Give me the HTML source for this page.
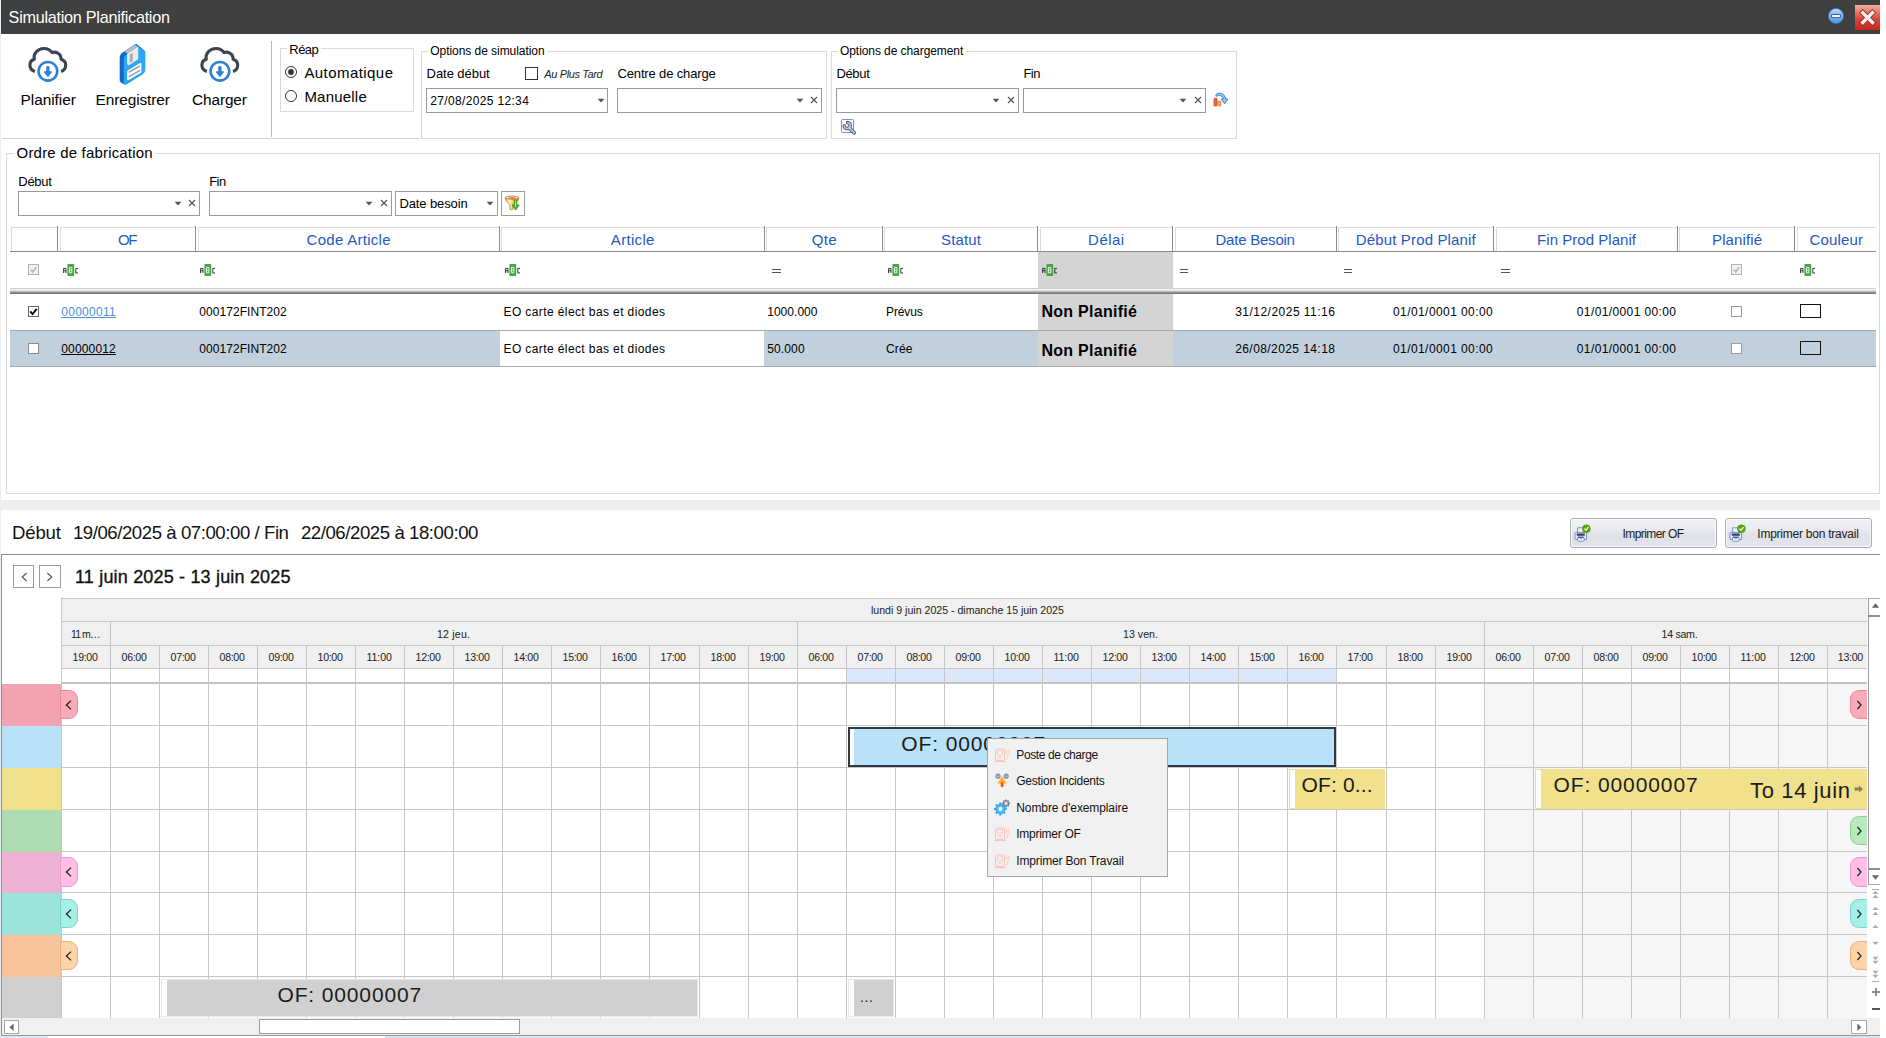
<!DOCTYPE html>
<html lang="fr"><head><meta charset="utf-8"><title>Simulation Planification</title><style>
html,body{margin:0;padding:0}
body{width:1886px;height:1038px;overflow:hidden;position:relative;background:#fff;font-family:"Liberation Sans",sans-serif}
.a{position:absolute;box-sizing:border-box}
.t{white-space:pre}
</style></head><body>
<div class="a" style="left:0px;top:0px;width:1px;height:1038px;background:#e9edf4;"></div>
<div class="a" style="left:1px;top:0px;width:1879px;height:34px;background:#404040;"></div>
<span class="a t" style="left:8.60px;top:9px;font-size:16.2px;line-height:1;color:#fff;letter-spacing:-0.261px;">Simulation Planification</span>
<svg class="a" style="left:1826px;top:6px" width="20" height="20" viewBox="0 0 20 20"><defs><linearGradient id="gmin" x1="0" y1="0" x2="0" y2="1"><stop offset="0" stop-color="#b9dcf6"/><stop offset="0.5" stop-color="#7fb7ea"/><stop offset="1" stop-color="#4d8fdc"/></linearGradient></defs>
<circle cx="10" cy="10" r="7.6" fill="url(#gmin)" stroke="#3a6fc0" stroke-width="0.8"/>
<rect x="5.6" y="8.6" width="8.8" height="2.8" fill="#fff" stroke="#2d56a8" stroke-width="0.9"/></svg>
<svg class="a" style="left:1854px;top:4px" width="28" height="28" viewBox="0 0 28 28"><defs><linearGradient id="gcl" x1="0" y1="0" x2="0" y2="1"><stop offset="0" stop-color="#f3b0a4"/><stop offset="0.45" stop-color="#dd5a4c"/><stop offset="0.55" stop-color="#d6463a"/><stop offset="1" stop-color="#c8281e"/></linearGradient></defs>
<rect x="1" y="1" width="25" height="25" fill="url(#gcl)"/>
<path d="M8.7 8.7 L18.5 18.5 M18.5 8.7 L8.7 18.5" stroke="#a82218" stroke-width="5.2" stroke-linecap="square"/>
<path d="M8.7 8.7 L18.5 18.5 M18.5 8.7 L8.7 18.5" stroke="#eef1f8" stroke-width="3.4" stroke-linecap="square"/></svg>
<svg class="a" style="left:20px;top:40px" width="60" height="50" viewBox="0 0 60 50"><path d="M14.9 31.5 C11.6 30.4 9.9 27.9 9.9 25 C9.9 22.3 11.6 20.1 14.3 19.3 C13.1 13.8 17.6 8.5 24.1 8.5 C27.5 8.5 30.3 10 32.1 12.7 C35.6 11.2 39.9 13.2 40.8 17 C41 17.9 41 18.7 41.2 19.3 C44 20.3 45.7 22.4 45.7 25 C45.7 27.9 44.1 30.4 41.1 31.5" fill="none" stroke="#3a4553" stroke-width="3.1" stroke-linecap="butt" stroke-linejoin="round"/>
<circle cx="27.9" cy="31.3" r="9.35" fill="#fff" stroke="#2f80d1" stroke-width="2.6"/>
<path d="M26.2 27.2 Q26.2 25.9 27.9 25.9 Q29.6 25.9 29.6 27.2 L29.6 31.2 L31.4 31.2 Q32.4 31.4 31.7 32.4 L28.5 36.6 Q27.9 37.3 27.3 36.6 L24.1 32.4 Q23.4 31.4 24.4 31.2 L26.2 31.2 Z" fill="#2f80d1"/></svg>
<svg class="a" style="left:192.2px;top:40px" width="60" height="50" viewBox="0 0 60 50"><path d="M14.9 31.5 C11.6 30.4 9.9 27.9 9.9 25 C9.9 22.3 11.6 20.1 14.3 19.3 C13.1 13.8 17.6 8.5 24.1 8.5 C27.5 8.5 30.3 10 32.1 12.7 C35.6 11.2 39.9 13.2 40.8 17 C41 17.9 41 18.7 41.2 19.3 C44 20.3 45.7 22.4 45.7 25 C45.7 27.9 44.1 30.4 41.1 31.5" fill="none" stroke="#3a4553" stroke-width="3.1" stroke-linecap="butt" stroke-linejoin="round"/>
<circle cx="27.9" cy="31.3" r="9.35" fill="#fff" stroke="#2f80d1" stroke-width="2.6"/>
<path d="M26.2 27.2 Q26.2 25.9 27.9 25.9 Q29.6 25.9 29.6 27.2 L29.6 31.2 L31.4 31.2 Q32.4 31.4 31.7 32.4 L28.5 36.6 Q27.9 37.3 27.3 36.6 L24.1 32.4 Q23.4 31.4 24.4 31.2 L26.2 31.2 Z" fill="#2f80d1"/></svg>
<svg class="a" style="left:105px;top:40px" width="60" height="50" viewBox="0 0 60 50"><path d="M30.2 4.2 Q31 3.6 31.9 4.3 L39.4 10.4 Q40.2 11.2 40.2 12.2 L40.2 29.4 Q40.2 32.6 37.4 34.3 L21.6 44.2 Q20.2 45 18.9 44.2 L15.9 42.4 Q14.7 41.6 14.7 40.2 L14.7 18 Q14.7 14.2 17.6 12.4 Z" fill="#0f6ac8"/>
<path d="M18.8 18.6 Q18.8 16.2 20.8 14.9 L32.4 6.9 Q33.3 6.3 34.1 7 L39.4 10.9 Q40.2 11.6 40.2 12.6 L40.2 29.4 Q40.2 32.6 37.4 34.3 L21.6 44 Q18.8 45.4 18.8 42.6 Z" fill="#2ea7f9"/>
<path d="M19.5 11.4 L29.9 4.8 L33.2 6.7 L22.6 13.6 Z" fill="#b9bdbb"/>
<path d="M22.6 13.6 L33.2 6.7 L33.2 19.3 L24.3 25.1 Q23.3 25.6 22.8 24.7 L22.1 23.6 L22.1 14.2 Z" fill="#ebebeb"/>
<path d="M24.8 14.5 L27.7 13.1 L27.7 21.2 L24.8 22.7 Z" fill="#a9b0ad"/>
<path d="M22.1 32 Q22.1 30.8 23.1 30.2 L35 23.1 Q36.4 22.4 36.4 24 L36.4 31.4 Q36.4 32.4 35.6 32.9 L23.6 40 Q22.1 40.7 22.1 39.2 Z" fill="#fff"/>
<path d="M24.3 32 L34.6 26.2 M24.3 36.5 L34.6 30.6" stroke="#9ba4a1" stroke-width="1.5" stroke-linecap="round"/></svg>
<span class="a t" style="left:20.50px;top:92px;font-size:15.4px;line-height:1;color:#000;letter-spacing:-0.021px;">Planifier</span>
<span class="a t" style="left:95.50px;top:92px;font-size:15.4px;line-height:1;color:#000;letter-spacing:-0.081px;">Enregistrer</span>
<span class="a t" style="left:192.00px;top:92px;font-size:15.4px;line-height:1;color:#000;letter-spacing:-0.112px;">Charger</span>
<div class="a" style="left:271px;top:41px;width:1px;height:96px;background:#b9b9b9;"></div>
<div class="a" style="left:2px;top:138px;width:417px;height:1px;background:#cfcfcf;"></div>
<div class="a" style="left:280px;top:48px;width:134px;height:64px;border:1px solid #dadada;"></div>
<div class="a" style="left:286.8px;top:47px;width:34.4px;height:3px;background:#fff;"></div>
<span class="a t" style="left:289.30px;top:43px;font-size:13px;line-height:1;color:#000;letter-spacing:-0.557px;">Réap</span>
<svg class="a" style="left:282.9px;top:63.5px" width="16" height="16" viewBox="0 0 16 16"><circle cx="8" cy="8" r="5.5" fill="#fff" stroke="#333" stroke-width="1"/><circle cx="8" cy="8" r="2.9" fill="#333"/></svg>
<svg class="a" style="left:282.9px;top:87.5px" width="16" height="16" viewBox="0 0 16 16"><circle cx="8" cy="8" r="5.5" fill="#fff" stroke="#333" stroke-width="1"/></svg>
<span class="a t" style="left:304.40px;top:65px;font-size:15px;line-height:1;color:#000;letter-spacing:0.437px;">Automatique</span>
<span class="a t" style="left:304.40px;top:89px;font-size:15px;line-height:1;color:#000;letter-spacing:0.214px;">Manuelle</span>
<div class="a" style="left:421px;top:51px;width:406px;height:88px;border:1px solid #dadada;"></div>
<div class="a" style="left:427.8px;top:50px;width:119.3px;height:3px;background:#fff;"></div>
<span class="a t" style="left:430.30px;top:45px;font-size:12px;line-height:1;color:#000;letter-spacing:-0.054px;">Options de simulation</span>
<div class="a" style="left:831px;top:51px;width:406px;height:88px;border:1px solid #dadada;"></div>
<div class="a" style="left:837.5px;top:50px;width:128.3px;height:3px;background:#fff;"></div>
<span class="a t" style="left:840.00px;top:45px;font-size:12px;line-height:1;color:#000;letter-spacing:-0.072px;">Options de chargement</span>
<span class="a t" style="left:426.60px;top:67px;font-size:13px;line-height:1;color:#000;letter-spacing:-0.059px;">Date début</span>
<div class="a" style="left:525px;top:67px;width:13px;height:13px;background:#fff;border:1px solid #333;"></div>
<span class="a t" style="left:544.35px;top:69px;font-size:11px;line-height:1;color:#222;letter-spacing:-0.388px;font-style:italic;">Au Plus Tard</span>
<span class="a t" style="left:617.50px;top:67px;font-size:13px;line-height:1;color:#000;letter-spacing:-0.148px;">Centre de charge</span>
<span class="a t" style="left:836.40px;top:67px;font-size:13px;line-height:1;color:#000;letter-spacing:-0.328px;">Début</span>
<span class="a t" style="left:1023.40px;top:67px;font-size:13px;line-height:1;color:#000;letter-spacing:-0.535px;">Fin</span>
<div class="a" style="left:426px;top:88px;width:182px;height:25px;background:#fff;border:1px solid #9a9a9a;"></div>
<svg class="a" style="left:596.6px;top:98.1px" width="8" height="5" viewBox="0 0 8 5"><path d="M0.6 0.8 L7.4 0.8 L4 4.4 Z" fill="#555"/></svg>
<span class="a t" style="left:430.30px;top:95px;font-size:12px;line-height:1;color:#000;letter-spacing:0.339px;">27/08/2025 12:34</span>
<div class="a" style="left:617px;top:88px;width:205px;height:25px;background:#fff;border:1px solid #9a9a9a;"></div>
<svg class="a" style="left:796px;top:98.1px" width="8" height="5" viewBox="0 0 8 5"><path d="M0.6 0.8 L7.4 0.8 L4 4.4 Z" fill="#555"/></svg>
<svg class="a" style="left:810.4px;top:96.3px" width="8" height="8" viewBox="0 0 8 8"><path d="M1 1 L7 7 M7 1 L1 7" stroke="#555" stroke-width="1.2" fill="none"/></svg>
<div class="a" style="left:836px;top:88px;width:183px;height:25px;background:#fff;border:1px solid #9a9a9a;"></div>
<svg class="a" style="left:992px;top:98.1px" width="8" height="5" viewBox="0 0 8 5"><path d="M0.6 0.8 L7.4 0.8 L4 4.4 Z" fill="#555"/></svg>
<svg class="a" style="left:1006.8px;top:96.3px" width="8" height="8" viewBox="0 0 8 8"><path d="M1 1 L7 7 M7 1 L1 7" stroke="#555" stroke-width="1.2" fill="none"/></svg>
<div class="a" style="left:1023px;top:88px;width:183px;height:25px;background:#fff;border:1px solid #9a9a9a;"></div>
<svg class="a" style="left:1179px;top:98.1px" width="8" height="5" viewBox="0 0 8 5"><path d="M0.6 0.8 L7.4 0.8 L4 4.4 Z" fill="#555"/></svg>
<svg class="a" style="left:1193.8px;top:96.3px" width="8" height="8" viewBox="0 0 8 8"><path d="M1 1 L7 7 M7 1 L1 7" stroke="#555" stroke-width="1.2" fill="none"/></svg>
<svg class="a" style="left:1213px;top:92px" width="16" height="15" viewBox="0 0 16 15"><rect x="1" y="6.2" width="3" height="7.8" rx="0.9" fill="#ea6a55" stroke="#c23a26" stroke-width="0.8"/>
<rect x="5.1" y="9.2" width="2.8" height="4.8" rx="0.8" fill="#f6b45a" stroke="#c87a22" stroke-width="0.8"/>
<path d="M3.4 4.2 C2.4 3.2 2.8 2.2 4 1.7 C8 0.2 12 2.2 12.6 7 L14.8 7 L11.6 11.8 L8.3 7 L10.4 7 C10 4 7.2 2.8 4.6 3.9 C4.2 4.2 3.8 4.4 3.4 4.2 Z" fill="#8fd0f6" stroke="#2f6fc0" stroke-width="0.9" stroke-linejoin="round"/></svg>
<svg class="a" style="left:840px;top:118px" width="17" height="18" viewBox="0 0 17 18"><rect x="1.5" y="1.5" width="12" height="13" rx="1" fill="#fbfcff" stroke="#7c8ecb" stroke-width="1"/>
<path d="M7.5 4.6 A3 3 0 1 1 4.2 7.9" fill="none" stroke="#3c4560" stroke-width="3.3" stroke-linecap="round"/>
<path d="M9.2 9.7 L14.1 14.8" stroke="#3c4560" stroke-width="3.7" stroke-linecap="round"/>
<path d="M7.5 4.6 A3 3 0 1 1 4.2 7.9" fill="none" stroke="#b4c8e6" stroke-width="1.7" stroke-linecap="round"/>
<path d="M9 9.5 L14.1 14.8" stroke="#b4c8e6" stroke-width="2.1" stroke-linecap="round"/></svg>
<div class="a" style="left:6px;top:153px;width:1874px;height:341px;border:1px solid #dadada;"></div>
<div class="a" style="left:14.1px;top:152px;width:141px;height:3px;background:#fff;"></div>
<span class="a t" style="left:16.60px;top:145px;font-size:15px;line-height:1;color:#000;letter-spacing:0.179px;">Ordre de fabrication</span>
<span class="a t" style="left:18.30px;top:175px;font-size:13px;line-height:1;color:#000;letter-spacing:-0.277px;">Début</span>
<span class="a t" style="left:209.20px;top:175px;font-size:13px;line-height:1;color:#000;letter-spacing:-0.535px;">Fin</span>
<div class="a" style="left:18px;top:191px;width:182px;height:25px;background:#fff;border:1px solid #9a9a9a;"></div>
<svg class="a" style="left:173.8px;top:201.1px" width="8" height="5" viewBox="0 0 8 5"><path d="M0.6 0.8 L7.4 0.8 L4 4.4 Z" fill="#555"/></svg>
<svg class="a" style="left:187.8px;top:199.3px" width="8" height="8" viewBox="0 0 8 8"><path d="M1 1 L7 7 M7 1 L1 7" stroke="#555" stroke-width="1.2" fill="none"/></svg>
<div class="a" style="left:209px;top:191px;width:183px;height:25px;background:#fff;border:1px solid #9a9a9a;"></div>
<svg class="a" style="left:365px;top:201.1px" width="8" height="5" viewBox="0 0 8 5"><path d="M0.6 0.8 L7.4 0.8 L4 4.4 Z" fill="#555"/></svg>
<svg class="a" style="left:380px;top:199.3px" width="8" height="8" viewBox="0 0 8 8"><path d="M1 1 L7 7 M7 1 L1 7" stroke="#555" stroke-width="1.2" fill="none"/></svg>
<div class="a" style="left:395px;top:191px;width:103px;height:25px;background:#fff;border:1px solid #9a9a9a;"></div>
<svg class="a" style="left:485.6px;top:201.1px" width="8" height="5" viewBox="0 0 8 5"><path d="M0.6 0.8 L7.4 0.8 L4 4.4 Z" fill="#555"/></svg>
<span class="a t" style="left:399.40px;top:197px;font-size:13px;line-height:1;color:#000;letter-spacing:-0.106px;">Date besoin</span>
<div class="a" style="left:501px;top:191px;width:24px;height:25px;background:#fff;border:1px solid #9a9a9a;"></div>
<svg class="a" style="left:504px;top:194px" width="17" height="17" viewBox="0 0 17 17"><defs><linearGradient id="gfu" x1="0" y1="0" x2="1" y2="0"><stop offset="0" stop-color="#f0b24e"/><stop offset="0.3" stop-color="#fff6dc"/><stop offset="0.6" stop-color="#f5c860"/><stop offset="1" stop-color="#d98a2a"/></linearGradient></defs>
<path d="M1.4 3.8 C1.2 8.6 6 8.8 6 11.2 L6 15.2 Q7.4 16.3 8.9 15.2 L8.9 11.2 C8.9 8.8 14.8 8.6 14.6 3.8 Z" fill="url(#gfu)" stroke="#c87820" stroke-width="0.9"/>
<ellipse cx="8" cy="3.7" rx="6.6" ry="1.6" fill="#fff3d6" stroke="#c87820" stroke-width="0.9"/>
<ellipse cx="8" cy="4" rx="4.2" ry="0.7" fill="#c2661a"/>
<path d="M10.4 6 h2.5 v5 h2.3 l-3.55 5.1 l-3.55 -5.1 h2.3 z" fill="#5db32e" stroke="#3f8a1c" stroke-width="0.8" stroke-linejoin="round"/>
<path d="M11.6 6.8 v6" stroke="#d6f2b8" stroke-width="0.8"/></svg>
<div class="a" style="left:1038px;top:252px;width:135px;height:36px;background:#d4d4d4;"></div>
<div class="a" style="left:1038px;top:294px;width:135px;height:36px;background:#d4d4d4;"></div>
<div class="a" style="left:10px;top:330.5px;width:1866px;height:35.5px;background:#c2cfdd;"></div>
<div class="a" style="left:500px;top:330.5px;width:264px;height:35.5px;background:#fff;"></div>
<div class="a" style="left:1038px;top:330.5px;width:135px;height:35.5px;background:#d4d4d4;"></div>
<div class="a" style="left:11px;top:227px;width:46.5px;height:24px;border:1px solid #dcdcdc;border-right:none;border-bottom:none;"></div>
<div class="a" style="left:57px;top:226px;width:1px;height:25px;background:#8a8a8a;"></div>
<div class="a" style="left:59.5px;top:227px;width:136.1px;height:24px;border:1px solid #dcdcdc;border-right:none;border-bottom:none;"></div>
<div class="a" style="left:195px;top:226px;width:1px;height:25px;background:#8a8a8a;"></div>
<span class="a t" style="left:117.95px;top:232px;font-size:15px;line-height:1;color:#2458c4;letter-spacing:-1.450px;">OF</span>
<div class="a" style="left:197.6px;top:227px;width:301.7px;height:24px;border:1px solid #dcdcdc;border-right:none;border-bottom:none;"></div>
<div class="a" style="left:499px;top:226px;width:1px;height:25px;background:#8a8a8a;"></div>
<span class="a t" style="left:306.55px;top:232px;font-size:15px;line-height:1;color:#2458c4;letter-spacing:0.286px;">Code Article</span>
<div class="a" style="left:501.3px;top:227px;width:262.5px;height:24px;border:1px solid #dcdcdc;border-right:none;border-bottom:none;"></div>
<div class="a" style="left:764px;top:226px;width:1px;height:25px;background:#8a8a8a;"></div>
<span class="a t" style="left:610.85px;top:232px;font-size:15px;line-height:1;color:#2458c4;letter-spacing:0.317px;">Article</span>
<div class="a" style="left:765.8px;top:227px;width:116.6px;height:24px;border:1px solid #dcdcdc;border-right:none;border-bottom:none;"></div>
<div class="a" style="left:882px;top:226px;width:1px;height:25px;background:#8a8a8a;"></div>
<span class="a t" style="left:811.70px;top:232px;font-size:15px;line-height:1;color:#2458c4;letter-spacing:0.425px;">Qte</span>
<div class="a" style="left:884.4px;top:227px;width:153.1px;height:24px;border:1px solid #dcdcdc;border-right:none;border-bottom:none;"></div>
<div class="a" style="left:1037px;top:226px;width:1px;height:25px;background:#8a8a8a;"></div>
<span class="a t" style="left:941.05px;top:232px;font-size:15px;line-height:1;color:#2458c4;letter-spacing:0.155px;">Statut</span>
<div class="a" style="left:1039.5px;top:227px;width:133px;height:24px;border:1px solid #dcdcdc;border-right:none;border-bottom:none;"></div>
<div class="a" style="left:1172px;top:226px;width:1px;height:25px;background:#8a8a8a;"></div>
<span class="a t" style="left:1088.10px;top:232px;font-size:15px;line-height:1;color:#2458c4;letter-spacing:0.450px;">Délai</span>
<div class="a" style="left:1174.5px;top:227px;width:161.3px;height:24px;border:1px solid #dcdcdc;border-right:none;border-bottom:none;"></div>
<div class="a" style="left:1336px;top:226px;width:1px;height:25px;background:#8a8a8a;"></div>
<span class="a t" style="left:1215.50px;top:232px;font-size:15px;line-height:1;color:#2458c4;letter-spacing:-0.225px;">Date Besoin</span>
<div class="a" style="left:1337.8px;top:227px;width:155.7px;height:24px;border:1px solid #dcdcdc;border-right:none;border-bottom:none;"></div>
<div class="a" style="left:1493px;top:226px;width:1px;height:25px;background:#8a8a8a;"></div>
<span class="a t" style="left:1355.75px;top:232px;font-size:15px;line-height:1;color:#2458c4;letter-spacing:0.150px;">Début Prod Planif</span>
<div class="a" style="left:1495.5px;top:227px;width:181.9px;height:24px;border:1px solid #dcdcdc;border-right:none;border-bottom:none;"></div>
<div class="a" style="left:1677px;top:226px;width:1px;height:25px;background:#8a8a8a;"></div>
<span class="a t" style="left:1537.05px;top:232px;font-size:15px;line-height:1;color:#2458c4;letter-spacing:0.043px;">Fin Prod Planif</span>
<div class="a" style="left:1679.4px;top:227px;width:115.1px;height:24px;border:1px solid #dcdcdc;border-right:none;border-bottom:none;"></div>
<div class="a" style="left:1794px;top:226px;width:1px;height:25px;background:#8a8a8a;"></div>
<span class="a t" style="left:1712.05px;top:232px;font-size:15px;line-height:1;color:#2458c4;letter-spacing:0.114px;">Planifié</span>
<div class="a" style="left:1796.5px;top:227px;width:79.3px;height:24px;border:1px solid #dcdcdc;border-right:none;border-bottom:none;"></div>
<span class="a t" style="left:1809.50px;top:232px;font-size:15px;line-height:1;color:#2458c4;letter-spacing:0.167px;">Couleur</span>
<div class="a" style="left:10px;top:251px;width:1866px;height:1px;background:#8c8c8c;"></div>
<div class="a" style="left:10px;top:288px;width:1866px;height:6px;background:linear-gradient(#bdbdbd 0,#f4f4f4 25%,#d2d2d2 50%,#8e8e8e 75%,#6e6e6e 100%);"></div>
<div class="a" style="left:10px;top:330px;width:1866px;height:1px;background:#a9a9a9;"></div>
<div class="a" style="left:10px;top:366px;width:1866px;height:1px;background:#a9a9a9;"></div>
<svg class="a" style="left:62.6px;top:264px" width="16" height="12" viewBox="0 0 16 12"><rect x="4.4" y="0" width="6.8" height="12" rx="0.8" fill="#43a843"/>
<path d="M0.6 9 V4.4 H3 V9 M0.6 6.8 H3" stroke="#333" stroke-width="1" fill="none"/>
<path d="M6.4 3.4 H8.8 V8.8 H6.4 Z M6.4 6.1 H8.8" stroke="#e8f6e8" stroke-width="1" fill="none"/>
<path d="M15 4.4 H12.8 V9 H15" stroke="#333" stroke-width="1" fill="none"/></svg>
<svg class="a" style="left:199.5px;top:264px" width="16" height="12" viewBox="0 0 16 12"><rect x="4.4" y="0" width="6.8" height="12" rx="0.8" fill="#43a843"/>
<path d="M0.6 9 V4.4 H3 V9 M0.6 6.8 H3" stroke="#333" stroke-width="1" fill="none"/>
<path d="M6.4 3.4 H8.8 V8.8 H6.4 Z M6.4 6.1 H8.8" stroke="#e8f6e8" stroke-width="1" fill="none"/>
<path d="M15 4.4 H12.8 V9 H15" stroke="#333" stroke-width="1" fill="none"/></svg>
<svg class="a" style="left:504.6px;top:264px" width="16" height="12" viewBox="0 0 16 12"><rect x="4.4" y="0" width="6.8" height="12" rx="0.8" fill="#43a843"/>
<path d="M0.6 9 V4.4 H3 V9 M0.6 6.8 H3" stroke="#333" stroke-width="1" fill="none"/>
<path d="M6.4 3.4 H8.8 V8.8 H6.4 Z M6.4 6.1 H8.8" stroke="#e8f6e8" stroke-width="1" fill="none"/>
<path d="M15 4.4 H12.8 V9 H15" stroke="#333" stroke-width="1" fill="none"/></svg>
<svg class="a" style="left:887.7px;top:264px" width="16" height="12" viewBox="0 0 16 12"><rect x="4.4" y="0" width="6.8" height="12" rx="0.8" fill="#43a843"/>
<path d="M0.6 9 V4.4 H3 V9 M0.6 6.8 H3" stroke="#333" stroke-width="1" fill="none"/>
<path d="M6.4 3.4 H8.8 V8.8 H6.4 Z M6.4 6.1 H8.8" stroke="#e8f6e8" stroke-width="1" fill="none"/>
<path d="M15 4.4 H12.8 V9 H15" stroke="#333" stroke-width="1" fill="none"/></svg>
<svg class="a" style="left:1042px;top:264px" width="16" height="12" viewBox="0 0 16 12"><rect x="4.4" y="0" width="6.8" height="12" rx="0.8" fill="#43a843"/>
<path d="M0.6 9 V4.4 H3 V9 M0.6 6.8 H3" stroke="#333" stroke-width="1" fill="none"/>
<path d="M6.4 3.4 H8.8 V8.8 H6.4 Z M6.4 6.1 H8.8" stroke="#e8f6e8" stroke-width="1" fill="none"/>
<path d="M15 4.4 H12.8 V9 H15" stroke="#333" stroke-width="1" fill="none"/></svg>
<svg class="a" style="left:1799.8px;top:264px" width="16" height="12" viewBox="0 0 16 12"><rect x="4.4" y="0" width="6.8" height="12" rx="0.8" fill="#43a843"/>
<path d="M0.6 9 V4.4 H3 V9 M0.6 6.8 H3" stroke="#333" stroke-width="1" fill="none"/>
<path d="M6.4 3.4 H8.8 V8.8 H6.4 Z M6.4 6.1 H8.8" stroke="#e8f6e8" stroke-width="1" fill="none"/>
<path d="M15 4.4 H12.8 V9 H15" stroke="#333" stroke-width="1" fill="none"/></svg>
<div class="a" style="left:772.3px;top:268.5px;width:8.5px;height:1px;background:#555;"></div>
<div class="a" style="left:772.3px;top:271.5px;width:8.5px;height:1px;background:#555;"></div>
<div class="a" style="left:1179.5px;top:268.5px;width:8.5px;height:1px;background:#555;"></div>
<div class="a" style="left:1179.5px;top:271.5px;width:8.5px;height:1px;background:#555;"></div>
<div class="a" style="left:1343.7px;top:268.5px;width:8.5px;height:1px;background:#555;"></div>
<div class="a" style="left:1343.7px;top:271.5px;width:8.5px;height:1px;background:#555;"></div>
<div class="a" style="left:1501px;top:268.5px;width:8.5px;height:1px;background:#555;"></div>
<div class="a" style="left:1501px;top:271.5px;width:8.5px;height:1px;background:#555;"></div>
<div class="a" style="left:28px;top:264.3px;width:11px;height:11px;background:#f2f2f2;border:1px solid #b0b0b0;"><svg width="9" height="9" viewBox="0 0 11 11" style="display:block"><path d="M2.2 5.8 L4.6 8.4 L8.8 2.8" stroke="#b5b5b5" stroke-width="2" fill="none"/></svg></div>
<div class="a" style="left:1731px;top:264.3px;width:11px;height:11px;background:#f2f2f2;border:1px solid #b0b0b0;"><svg width="9" height="9" viewBox="0 0 11 11" style="display:block"><path d="M2.2 5.8 L4.6 8.4 L8.8 2.8" stroke="#b5b5b5" stroke-width="2" fill="none"/></svg></div>
<div class="a" style="left:28px;top:306px;width:11px;height:11px;background:#fff;border:1px solid #666;"><svg width="9" height="9" viewBox="0 0 11 11" style="display:block"><path d="M1.6 5.4 L4.4 8.6 L9.4 2.2" stroke="#000" stroke-width="2.3" fill="none"/></svg></div>
<div class="a" style="left:28px;top:342.5px;width:11px;height:11px;background:#fff;border:1px solid #8a8a8a;"></div>
<div class="a" style="left:1731px;top:306.3px;width:11px;height:11px;background:#fff;border:1px solid #9a9a9a;"></div>
<div class="a" style="left:1731px;top:342.8px;width:11px;height:11px;background:#fff;border:1px solid #9a9a9a;"></div>
<span class="a t" style="left:61.20px;top:306px;font-size:12px;line-height:1;color:#4b8fd6;letter-spacing:0.300px;text-decoration:underline;">00000011</span>
<span class="a t" style="left:61.20px;top:343px;font-size:12px;line-height:1;color:#000;letter-spacing:0.171px;text-decoration:underline;">00000012</span>
<span class="a t" style="left:199.20px;top:306px;font-size:12px;line-height:1;color:#000;letter-spacing:0.067px;">000172FINT202</span>
<span class="a t" style="left:503.50px;top:306px;font-size:12px;line-height:1;color:#000;letter-spacing:0.397px;">EO carte élect bas et diodes</span>
<span class="a t" style="left:1393.00px;top:306px;font-size:12px;line-height:1;color:#000;letter-spacing:0.419px;">01/01/0001 00:00</span>
<span class="a t" style="left:1576.80px;top:306px;font-size:12px;line-height:1;color:#000;letter-spacing:0.385px;">01/01/0001 00:00</span>
<span class="a t" style="left:199.20px;top:343px;font-size:12px;line-height:1;color:#000;letter-spacing:0.067px;">000172FINT202</span>
<span class="a t" style="left:503.50px;top:343px;font-size:12px;line-height:1;color:#000;letter-spacing:0.397px;">EO carte élect bas et diodes</span>
<span class="a t" style="left:1393.00px;top:343px;font-size:12px;line-height:1;color:#000;letter-spacing:0.419px;">01/01/0001 00:00</span>
<span class="a t" style="left:1576.80px;top:343px;font-size:12px;line-height:1;color:#000;letter-spacing:0.385px;">01/01/0001 00:00</span>
<span class="a t" style="left:767.20px;top:306px;font-size:12px;line-height:1;color:#000;letter-spacing:0.037px;">1000.000</span>
<span class="a t" style="left:767.20px;top:343px;font-size:12px;line-height:1;color:#000;letter-spacing:0.136px;">50.000</span>
<span class="a t" style="left:886.00px;top:306px;font-size:12px;line-height:1;color:#000;letter-spacing:-0.124px;">Prévus</span>
<span class="a t" style="left:886.00px;top:343px;font-size:12px;line-height:1;color:#000;letter-spacing:0.153px;">Crée</span>
<span class="a t" style="left:1235.20px;top:306px;font-size:12px;line-height:1;color:#000;letter-spacing:0.479px;">31/12/2025 11:16</span>
<span class="a t" style="left:1235.20px;top:343px;font-size:12px;line-height:1;color:#000;letter-spacing:0.419px;">26/08/2025 14:18</span>
<span class="a t" style="left:1041.40px;top:304px;font-size:16px;line-height:1;color:#000;letter-spacing:0.284px;font-weight:bold;">Non Planifié</span>
<span class="a t" style="left:1041.40px;top:343px;font-size:16px;line-height:1;color:#000;letter-spacing:0.284px;font-weight:bold;">Non Planifié</span>
<div class="a" style="left:1800px;top:304px;width:21px;height:14px;background:#fff;border:1px solid #111;"></div>
<div class="a" style="left:1800px;top:341px;width:21px;height:14px;border:1px solid #111;"></div>
<div class="a" style="left:1px;top:500px;width:1879px;height:10px;background:#efefef;"></div>
<span class="a t" style="left:11.90px;top:524px;font-size:18.6px;line-height:1;color:#111;letter-spacing:-0.140px;">Début</span>
<span class="a t" style="left:72.90px;top:524px;font-size:18.6px;line-height:1;color:#111;letter-spacing:-0.438px;">19/06/2025 à 07:00:00 / Fin</span>
<span class="a t" style="left:300.90px;top:524px;font-size:18.6px;line-height:1;color:#111;letter-spacing:-0.429px;">22/06/2025 à 18:00:00</span>
<div class="a" style="left:1570px;top:518px;width:147px;height:30px;border:1px solid #a9adb9;border-radius:3px;background:linear-gradient(#f2f2f6 0,#e9eaef 40%,#dfe0e8 60%,#e5e6ec 100%);box-shadow:inset 0 0 0 1px rgba(255,255,255,.7);"></div>
<svg class="a" style="left:1573.5px;top:523.5px" width="17" height="18" viewBox="0 0 17 18"><path d="M3.6 3.8 H9.6 V10 H3.6Z" fill="#f3f6fc" stroke="#7186c6" stroke-width="0.9"/>
<path d="M1 9 Q1 8.4 1.6 8.4 H12 Q12.6 8.4 12.6 9 V15 Q12.6 15.6 12 15.6 H1.6 Q1 15.6 1 15Z" fill="#e4ebf8" stroke="#6f84c4" stroke-width="0.9"/>
<path d="M2.8 9.4 H10.8 V11.2 Q10.8 11.8 10.2 11.8 H3.4 Q2.8 11.8 2.8 11.2Z" fill="#2f3d68"/>
<path d="M3.6 13.4 H10 V16.6 Q10 17.2 9.4 17.2 H4.2 Q3.6 17.2 3.6 16.6Z" fill="#fff" stroke="#6f84c4" stroke-width="0.9"/>
<path d="M4 13.2 H9.6" stroke="#2f3d68" stroke-width="1"/>
<path d="M5.4 14.8 H8.2" stroke="#4aa3ea" stroke-width="0.9"/>
<circle cx="12.4" cy="4.8" r="4" fill="#5ca80a" stroke="#4c9000" stroke-width="0.5"/>
<path d="M10.4 4.6 L12 6.2 L14.5 3.2" stroke="#fff" stroke-width="1.2" fill="none"/></svg>
<span class="a t" style="left:1622.60px;top:528px;font-size:12px;line-height:1;color:#1a1a1a;letter-spacing:-0.592px;">Imprimer OF</span>
<div class="a" style="left:1725px;top:518px;width:147px;height:30px;border:1px solid #a9adb9;border-radius:3px;background:linear-gradient(#f2f2f6 0,#e9eaef 40%,#dfe0e8 60%,#e5e6ec 100%);box-shadow:inset 0 0 0 1px rgba(255,255,255,.7);"></div>
<svg class="a" style="left:1728.5px;top:523.5px" width="17" height="18" viewBox="0 0 17 18"><path d="M3.6 3.8 H9.6 V10 H3.6Z" fill="#f3f6fc" stroke="#7186c6" stroke-width="0.9"/>
<path d="M1 9 Q1 8.4 1.6 8.4 H12 Q12.6 8.4 12.6 9 V15 Q12.6 15.6 12 15.6 H1.6 Q1 15.6 1 15Z" fill="#e4ebf8" stroke="#6f84c4" stroke-width="0.9"/>
<path d="M2.8 9.4 H10.8 V11.2 Q10.8 11.8 10.2 11.8 H3.4 Q2.8 11.8 2.8 11.2Z" fill="#2f3d68"/>
<path d="M3.6 13.4 H10 V16.6 Q10 17.2 9.4 17.2 H4.2 Q3.6 17.2 3.6 16.6Z" fill="#fff" stroke="#6f84c4" stroke-width="0.9"/>
<path d="M4 13.2 H9.6" stroke="#2f3d68" stroke-width="1"/>
<path d="M5.4 14.8 H8.2" stroke="#4aa3ea" stroke-width="0.9"/>
<circle cx="12.4" cy="4.8" r="4" fill="#5ca80a" stroke="#4c9000" stroke-width="0.5"/>
<path d="M10.4 4.6 L12 6.2 L14.5 3.2" stroke="#fff" stroke-width="1.2" fill="none"/></svg>
<span class="a t" style="left:1757.30px;top:528px;font-size:12px;line-height:1;color:#1a1a1a;letter-spacing:-0.238px;">Imprimer bon travail</span>
<div class="a" style="left:1px;top:554px;width:1879px;height:1px;background:#8f8f8f;"></div>
<div class="a" style="left:1px;top:554px;width:1px;height:481.5px;background:#8f8f8f;"></div>
<div class="a" style="left:1px;top:1035px;width:1879px;height:1px;background:#9a9a9a;"></div>
<div class="a" style="left:0px;top:1036px;width:48px;height:2px;background:#dfe9f5;"></div>
<div class="a" style="left:385px;top:1036px;width:1495px;height:2px;background:#d3e6f2;"></div>
<div class="a" style="left:13px;top:565px;width:21px;height:23px;background:#fff;border:1px solid #9c9c9c;"></div>
<svg class="a" style="left:17.5px;top:570.5px" width="12" height="12" viewBox="0 0 12 12"><path d="M2.6 -4 L-1.8 0 L2.6 4" transform="translate(6,6)" stroke="#555" stroke-width="1.1" fill="none"/></svg>
<div class="a" style="left:39px;top:565px;width:22px;height:23px;background:#fff;border:1px solid #9c9c9c;"></div>
<svg class="a" style="left:44px;top:570.5px" width="12" height="12" viewBox="0 0 12 12"><path d="M-2.6 -4 L1.8 0 L-2.6 4" transform="translate(6,6)" stroke="#555" stroke-width="1.1" fill="none"/></svg>
<span class="a t" style="left:75.00px;top:568px;font-size:18px;line-height:1;color:#111;letter-spacing:0.178px;-webkit-text-stroke:0.35px #111;">11 juin 2025 - 13 juin 2025</span>
<div class="a" style="left:61px;top:598px;width:1806px;height:70.5px;background:#f0f0f0;"></div>
<div class="a" style="left:61px;top:668.5px;width:1806px;height:350px;background:#fff;"></div>
<div class="a" style="left:1484px;top:684px;width:383px;height:334px;background:#f6f6f6;"></div>
<div class="a" style="left:846px;top:669px;width:490px;height:13.5px;background:#dce8fa;"></div>
<div class="a" style="left:61px;top:598px;width:1806px;height:1px;background:#c6c6c6;"></div>
<div class="a" style="left:61px;top:621px;width:1806px;height:1px;background:#c6c6c6;"></div>
<div class="a" style="left:61px;top:645px;width:1806px;height:1px;background:#c6c6c6;"></div>
<div class="a" style="left:61px;top:668px;width:1806px;height:1px;background:#c6c6c6;"></div>
<div class="a" style="left:61px;top:598px;width:1px;height:420px;background:#c6c6c6;"></div>
<div class="a" style="left:61px;top:682px;width:1806px;height:2px;background:#c2c2c2;"></div>
<div class="a" style="left:110px;top:621px;width:1px;height:397px;background:#c6c6c6;"></div>
<div class="a" style="left:159px;top:645px;width:1px;height:373px;background:#c6c6c6;"></div>
<div class="a" style="left:208px;top:645px;width:1px;height:373px;background:#c6c6c6;"></div>
<div class="a" style="left:257px;top:645px;width:1px;height:373px;background:#c6c6c6;"></div>
<div class="a" style="left:306px;top:645px;width:1px;height:373px;background:#c6c6c6;"></div>
<div class="a" style="left:355px;top:645px;width:1px;height:373px;background:#c6c6c6;"></div>
<div class="a" style="left:404px;top:645px;width:1px;height:373px;background:#c6c6c6;"></div>
<div class="a" style="left:453px;top:645px;width:1px;height:373px;background:#c6c6c6;"></div>
<div class="a" style="left:502px;top:645px;width:1px;height:373px;background:#c6c6c6;"></div>
<div class="a" style="left:551px;top:645px;width:1px;height:373px;background:#c6c6c6;"></div>
<div class="a" style="left:600px;top:645px;width:1px;height:373px;background:#c6c6c6;"></div>
<div class="a" style="left:649px;top:645px;width:1px;height:373px;background:#c6c6c6;"></div>
<div class="a" style="left:699px;top:645px;width:1px;height:373px;background:#c6c6c6;"></div>
<div class="a" style="left:748px;top:645px;width:1px;height:373px;background:#c6c6c6;"></div>
<div class="a" style="left:797px;top:621px;width:1px;height:397px;background:#c6c6c6;"></div>
<div class="a" style="left:846px;top:645px;width:1px;height:373px;background:#c6c6c6;"></div>
<div class="a" style="left:895px;top:645px;width:1px;height:373px;background:#c6c6c6;"></div>
<div class="a" style="left:944px;top:645px;width:1px;height:373px;background:#c6c6c6;"></div>
<div class="a" style="left:993px;top:645px;width:1px;height:373px;background:#c6c6c6;"></div>
<div class="a" style="left:1042px;top:645px;width:1px;height:373px;background:#c6c6c6;"></div>
<div class="a" style="left:1091px;top:645px;width:1px;height:373px;background:#c6c6c6;"></div>
<div class="a" style="left:1140px;top:645px;width:1px;height:373px;background:#c6c6c6;"></div>
<div class="a" style="left:1189px;top:645px;width:1px;height:373px;background:#c6c6c6;"></div>
<div class="a" style="left:1238px;top:645px;width:1px;height:373px;background:#c6c6c6;"></div>
<div class="a" style="left:1287px;top:645px;width:1px;height:373px;background:#c6c6c6;"></div>
<div class="a" style="left:1336px;top:645px;width:1px;height:373px;background:#c6c6c6;"></div>
<div class="a" style="left:1386px;top:645px;width:1px;height:373px;background:#c6c6c6;"></div>
<div class="a" style="left:1435px;top:645px;width:1px;height:373px;background:#c6c6c6;"></div>
<div class="a" style="left:1484px;top:621px;width:1px;height:397px;background:#c6c6c6;"></div>
<div class="a" style="left:1533px;top:645px;width:1px;height:373px;background:#c6c6c6;"></div>
<div class="a" style="left:1582px;top:645px;width:1px;height:373px;background:#c6c6c6;"></div>
<div class="a" style="left:1631px;top:645px;width:1px;height:373px;background:#c6c6c6;"></div>
<div class="a" style="left:1680px;top:645px;width:1px;height:373px;background:#c6c6c6;"></div>
<div class="a" style="left:1729px;top:645px;width:1px;height:373px;background:#c6c6c6;"></div>
<div class="a" style="left:1778px;top:645px;width:1px;height:373px;background:#c6c6c6;"></div>
<div class="a" style="left:1827px;top:645px;width:1px;height:373px;background:#c6c6c6;"></div>
<div class="a" style="left:61px;top:725px;width:1806px;height:1px;background:#c6c6c6;"></div>
<div class="a" style="left:61px;top:767px;width:1806px;height:1px;background:#c6c6c6;"></div>
<div class="a" style="left:61px;top:809px;width:1806px;height:1px;background:#c6c6c6;"></div>
<div class="a" style="left:61px;top:851px;width:1806px;height:1px;background:#c6c6c6;"></div>
<div class="a" style="left:61px;top:892px;width:1806px;height:1px;background:#c6c6c6;"></div>
<div class="a" style="left:61px;top:934px;width:1806px;height:1px;background:#c6c6c6;"></div>
<div class="a" style="left:61px;top:976px;width:1806px;height:1px;background:#c6c6c6;"></div>
<span class="a t" style="left:871.00px;top:605px;font-size:10.6px;line-height:1;color:#222;letter-spacing:-0.007px;">lundi 9 juin 2025 - dimanche 15 juin 2025</span>
<span class="a t" style="left:71.00px;top:629px;font-size:10.6px;line-height:1;color:#222;letter-spacing:-0.947px;">11 m…</span>
<span class="a t" style="left:437.00px;top:629px;font-size:10.6px;line-height:1;color:#222;letter-spacing:0.191px;">12 jeu.</span>
<span class="a t" style="left:1123.00px;top:629px;font-size:10.6px;line-height:1;color:#222;letter-spacing:0.039px;">13 ven.</span>
<span class="a t" style="left:1661.60px;top:629px;font-size:10.6px;line-height:1;color:#222;letter-spacing:-0.280px;">14 sam.</span>
<span class="a t" style="left:72.55px;top:652px;font-size:10.6px;line-height:1;color:#222;letter-spacing:-0.313px;">19:00</span>
<span class="a t" style="left:121.58px;top:652px;font-size:10.6px;line-height:1;color:#222;letter-spacing:-0.313px;">06:00</span>
<span class="a t" style="left:170.58px;top:652px;font-size:10.6px;line-height:1;color:#222;letter-spacing:-0.313px;">07:00</span>
<span class="a t" style="left:219.58px;top:652px;font-size:10.6px;line-height:1;color:#222;letter-spacing:-0.313px;">08:00</span>
<span class="a t" style="left:268.58px;top:652px;font-size:10.6px;line-height:1;color:#222;letter-spacing:-0.313px;">09:00</span>
<span class="a t" style="left:317.58px;top:652px;font-size:10.6px;line-height:1;color:#222;letter-spacing:-0.313px;">10:00</span>
<span class="a t" style="left:366.58px;top:652px;font-size:10.6px;line-height:1;color:#222;letter-spacing:-0.114px;">11:00</span>
<span class="a t" style="left:415.58px;top:652px;font-size:10.6px;line-height:1;color:#222;letter-spacing:-0.313px;">12:00</span>
<span class="a t" style="left:464.58px;top:652px;font-size:10.6px;line-height:1;color:#222;letter-spacing:-0.313px;">13:00</span>
<span class="a t" style="left:513.58px;top:652px;font-size:10.6px;line-height:1;color:#222;letter-spacing:-0.313px;">14:00</span>
<span class="a t" style="left:562.58px;top:652px;font-size:10.6px;line-height:1;color:#222;letter-spacing:-0.313px;">15:00</span>
<span class="a t" style="left:611.58px;top:652px;font-size:10.6px;line-height:1;color:#222;letter-spacing:-0.313px;">16:00</span>
<span class="a t" style="left:660.58px;top:652px;font-size:10.6px;line-height:1;color:#222;letter-spacing:-0.313px;">17:00</span>
<span class="a t" style="left:710.58px;top:652px;font-size:10.6px;line-height:1;color:#222;letter-spacing:-0.313px;">18:00</span>
<span class="a t" style="left:759.58px;top:652px;font-size:10.6px;line-height:1;color:#222;letter-spacing:-0.313px;">19:00</span>
<span class="a t" style="left:808.58px;top:652px;font-size:10.6px;line-height:1;color:#222;letter-spacing:-0.313px;">06:00</span>
<span class="a t" style="left:857.58px;top:652px;font-size:10.6px;line-height:1;color:#222;letter-spacing:-0.313px;">07:00</span>
<span class="a t" style="left:906.58px;top:652px;font-size:10.6px;line-height:1;color:#222;letter-spacing:-0.313px;">08:00</span>
<span class="a t" style="left:955.58px;top:652px;font-size:10.6px;line-height:1;color:#222;letter-spacing:-0.313px;">09:00</span>
<span class="a t" style="left:1004.58px;top:652px;font-size:10.6px;line-height:1;color:#222;letter-spacing:-0.313px;">10:00</span>
<span class="a t" style="left:1053.58px;top:652px;font-size:10.6px;line-height:1;color:#222;letter-spacing:-0.114px;">11:00</span>
<span class="a t" style="left:1102.58px;top:652px;font-size:10.6px;line-height:1;color:#222;letter-spacing:-0.313px;">12:00</span>
<span class="a t" style="left:1151.58px;top:652px;font-size:10.6px;line-height:1;color:#222;letter-spacing:-0.313px;">13:00</span>
<span class="a t" style="left:1200.58px;top:652px;font-size:10.6px;line-height:1;color:#222;letter-spacing:-0.313px;">14:00</span>
<span class="a t" style="left:1249.58px;top:652px;font-size:10.6px;line-height:1;color:#222;letter-spacing:-0.313px;">15:00</span>
<span class="a t" style="left:1298.58px;top:652px;font-size:10.6px;line-height:1;color:#222;letter-spacing:-0.313px;">16:00</span>
<span class="a t" style="left:1347.58px;top:652px;font-size:10.6px;line-height:1;color:#222;letter-spacing:-0.313px;">17:00</span>
<span class="a t" style="left:1397.58px;top:652px;font-size:10.6px;line-height:1;color:#222;letter-spacing:-0.313px;">18:00</span>
<span class="a t" style="left:1446.58px;top:652px;font-size:10.6px;line-height:1;color:#222;letter-spacing:-0.313px;">19:00</span>
<span class="a t" style="left:1495.58px;top:652px;font-size:10.6px;line-height:1;color:#222;letter-spacing:-0.313px;">06:00</span>
<span class="a t" style="left:1544.58px;top:652px;font-size:10.6px;line-height:1;color:#222;letter-spacing:-0.313px;">07:00</span>
<span class="a t" style="left:1593.58px;top:652px;font-size:10.6px;line-height:1;color:#222;letter-spacing:-0.313px;">08:00</span>
<span class="a t" style="left:1642.58px;top:652px;font-size:10.6px;line-height:1;color:#222;letter-spacing:-0.313px;">09:00</span>
<span class="a t" style="left:1691.58px;top:652px;font-size:10.6px;line-height:1;color:#222;letter-spacing:-0.313px;">10:00</span>
<span class="a t" style="left:1740.58px;top:652px;font-size:10.6px;line-height:1;color:#222;letter-spacing:-0.114px;">11:00</span>
<span class="a t" style="left:1789.58px;top:652px;font-size:10.6px;line-height:1;color:#222;letter-spacing:-0.313px;">12:00</span>
<span class="a t" style="left:1837.85px;top:652px;font-size:10.6px;line-height:1;color:#222;letter-spacing:-0.313px;">13:00</span>
<div class="a" style="left:2px;top:684px;width:59px;height:42px;background:#f2a3af;"></div>
<div class="a" style="left:2px;top:726px;width:59px;height:42px;background:#b9e1f7;"></div>
<div class="a" style="left:2px;top:768px;width:59px;height:42px;background:#f1e08c;"></div>
<div class="a" style="left:2px;top:810px;width:59px;height:42px;background:#addcb0;"></div>
<div class="a" style="left:2px;top:852px;width:59px;height:41px;background:#edb1d3;"></div>
<div class="a" style="left:2px;top:893px;width:59px;height:42px;background:#9be3db;"></div>
<div class="a" style="left:2px;top:935px;width:59px;height:42px;background:#f6c39a;"></div>
<div class="a" style="left:2px;top:977px;width:59px;height:41px;background:#d0d0d0;"></div>
<div class="a" style="left:60px;top:689.8px;width:18px;height:29.5px;background:#fbaab8;border:1px solid #e58a9b;border-radius:0 9px 9px 0;"></div>
<svg class="a" style="left:64px;top:698.8px" width="10" height="12" viewBox="0 0 10 12"><path d="M7 1.6 L2.4 6 L7 10.4" stroke="#222" stroke-width="1.3" fill="none"/></svg>
<div class="a" style="left:60px;top:857.3px;width:18px;height:29.5px;background:#ffbfe5;border:1px solid #e59bc6;border-radius:0 9px 9px 0;"></div>
<svg class="a" style="left:64px;top:866.3px" width="10" height="12" viewBox="0 0 10 12"><path d="M7 1.6 L2.4 6 L7 10.4" stroke="#222" stroke-width="1.3" fill="none"/></svg>
<div class="a" style="left:60px;top:898.8px;width:18px;height:29.5px;background:#a6f0e8;border:1px solid #7fd3ca;border-radius:0 9px 9px 0;"></div>
<svg class="a" style="left:64px;top:907.8px" width="10" height="12" viewBox="0 0 10 12"><path d="M7 1.6 L2.4 6 L7 10.4" stroke="#222" stroke-width="1.3" fill="none"/></svg>
<div class="a" style="left:60px;top:940.8px;width:18px;height:29.5px;background:#ffd3a8;border:1px solid #e8b080;border-radius:0 9px 9px 0;"></div>
<svg class="a" style="left:64px;top:949.8px" width="10" height="12" viewBox="0 0 10 12"><path d="M7 1.6 L2.4 6 L7 10.4" stroke="#222" stroke-width="1.3" fill="none"/></svg>
<div class="a" style="left:1850px;top:689.8px;width:17px;height:29.5px;background:#fbaab8;border:1px solid #e58a9b;border-radius:9px 0 0 9px;border-right:none;"></div>
<svg class="a" style="left:1853.5px;top:698.8px" width="10" height="12" viewBox="0 0 10 12"><path d="M3.4 2 L7 6 L3.4 10" stroke="#222" stroke-width="1.2" fill="none"/></svg>
<div class="a" style="left:1850px;top:815.8px;width:17px;height:29.5px;background:#b9e9bd;border:1px solid #8fcf95;border-radius:9px 0 0 9px;border-right:none;"></div>
<svg class="a" style="left:1853.5px;top:824.8px" width="10" height="12" viewBox="0 0 10 12"><path d="M3.4 2 L7 6 L3.4 10" stroke="#222" stroke-width="1.2" fill="none"/></svg>
<div class="a" style="left:1850px;top:857.3px;width:17px;height:29.5px;background:#ffbfe5;border:1px solid #e59bc6;border-radius:9px 0 0 9px;border-right:none;"></div>
<svg class="a" style="left:1853.5px;top:866.3px" width="10" height="12" viewBox="0 0 10 12"><path d="M3.4 2 L7 6 L3.4 10" stroke="#222" stroke-width="1.2" fill="none"/></svg>
<div class="a" style="left:1850px;top:898.8px;width:17px;height:29.5px;background:#a6f0e8;border:1px solid #7fd3ca;border-radius:9px 0 0 9px;border-right:none;"></div>
<svg class="a" style="left:1853.5px;top:907.8px" width="10" height="12" viewBox="0 0 10 12"><path d="M3.4 2 L7 6 L3.4 10" stroke="#222" stroke-width="1.2" fill="none"/></svg>
<div class="a" style="left:1850px;top:940.8px;width:17px;height:29.5px;background:#ffd3a8;border:1px solid #e8b080;border-radius:9px 0 0 9px;border-right:none;"></div>
<svg class="a" style="left:1853.5px;top:949.8px" width="10" height="12" viewBox="0 0 10 12"><path d="M3.4 2 L7 6 L3.4 10" stroke="#222" stroke-width="1.2" fill="none"/></svg>
<div class="a" style="left:848px;top:727px;width:487.5px;height:40.3px;background:#b9e1f7;border:2px solid #2d3943;"></div>
<div class="a" style="left:850px;top:729px;width:4px;height:36.3px;background:#fff;"></div>
<span class="a t" style="left:901.30px;top:733px;font-size:21px;line-height:1;color:#1c1c1c;letter-spacing:0.882px;">OF: 00000007</span>
<div class="a" style="left:1289px;top:769px;width:96px;height:40px;background:#f1e08c;border:1px solid #f1e08c;"></div>
<div class="a" style="left:1290px;top:770px;width:5px;height:38px;background:#fff;"></div>
<span class="a t" style="left:1301.50px;top:774px;font-size:21px;line-height:1;color:#1c1c1c;letter-spacing:0.138px;">OF: 0...</span>
<div class="a" style="left:1535px;top:769px;width:332px;height:40px;background:#f1e08c;border:1px solid #f1e08c;"></div>
<div class="a" style="left:1536px;top:770px;width:5px;height:38px;background:#fff;"></div>
<span class="a t" style="left:1553.50px;top:774px;font-size:21px;line-height:1;color:#1c1c1c;letter-spacing:0.900px;">OF: 00000007</span>
<span class="a t" style="left:1750.00px;top:780px;font-size:22px;line-height:1;color:#1c1c1c;letter-spacing:0.649px;">To 14 juin</span>
<svg class="a" style="left:1854px;top:785px" width="10" height="8" viewBox="0 0 10 8"><path d="M0.6 2.6 H5 V0.6 L9 4 L5 7.4 V5.4 H0.6Z" fill="#8c8250"/></svg>
<div class="a" style="left:161px;top:978.5px;width:537px;height:38.5px;background:#d0d0d0;border:1px solid #e9e9e9;"></div>
<div class="a" style="left:162px;top:979.5px;width:5px;height:36.5px;background:#fff;"></div>
<span class="a t" style="left:277.50px;top:984px;font-size:21px;line-height:1;color:#1c1c1c;letter-spacing:0.855px;">OF: 00000007</span>
<div class="a" style="left:848px;top:978.5px;width:46px;height:38.5px;background:#d0d0d0;border:1px solid #e9e9e9;"></div>
<div class="a" style="left:849px;top:979.5px;width:5px;height:36.5px;background:#fff;"></div>
<span class="a t" style="left:860.00px;top:990px;font-size:14px;line-height:1;color:#1c1c1c;letter-spacing:0.655px;">...</span>
<div class="a" style="left:2px;top:1018px;width:1878px;height:17px;background:#f0f0f0;"></div>
<div class="a" style="left:3.5px;top:1019.5px;width:15.5px;height:14.5px;background:#fff;border:1px solid #a8a8a8;"></div>
<svg class="a" style="left:3.5px;top:1019.5px" width="15.5" height="14.5" viewBox="0 0 15.5 14.5"><path d="M9.6 3.4 L5.4 7.2 L9.6 11 Z" fill="#666"/></svg>
<div class="a" style="left:1851px;top:1019.5px;width:15.5px;height:14.5px;background:#fff;border:1px solid #a8a8a8;"></div>
<svg class="a" style="left:1851px;top:1019.5px" width="15.5" height="14.5" viewBox="0 0 15.5 14.5"><path d="M6.4 3.4 L10.2 7.2 L6.4 11 Z" fill="#666"/></svg>
<div class="a" style="left:259px;top:1019px;width:261px;height:15px;background:#fff;border:1px solid #9c9c9c;"></div>
<div class="a" style="left:1868px;top:598px;width:12px;height:420px;background:#fff;"></div>
<div class="a" style="left:1868px;top:598px;width:1px;height:271px;background:#9c9c9c;"></div>
<div class="a" style="left:1868px;top:598px;width:12px;height:1px;background:#a8a8a8;"></div>
<div class="a" style="left:1868px;top:614.5px;width:12px;height:2px;background:#8e8e8e;"></div>
<svg class="a" style="left:1871px;top:602px" width="9" height="7" viewBox="0 0 9 7"><path d="M0.8 5.8 L4.5 1.2 L8.2 5.8 Z" fill="#666"/></svg>
<div class="a" style="left:1868px;top:868px;width:12px;height:2px;background:#8e8e8e;"></div>
<div class="a" style="left:1868px;top:884px;width:12px;height:1px;background:#a8a8a8;"></div>
<div class="a" style="left:1868px;top:868px;width:1px;height:17px;background:#9c9c9c;"></div>
<svg class="a" style="left:1871px;top:873.5px" width="9" height="7" viewBox="0 0 9 7"><path d="M0.8 1.2 L4.5 5.8 L8.2 1.2 Z" fill="#666"/></svg>
<div class="a" style="left:1872.2px;top:888.5px;width:7px;height:1px;background:#aaa;"></div>
<svg class="a" style="left:1872.2px;top:889.5px" width="7" height="5" viewBox="0 0 7 5"><path d="M0.5 4 L3.5 0.8 L6.5 4 Z" fill="#aaa"/></svg>
<svg class="a" style="left:1872.2px;top:894px" width="7" height="5" viewBox="0 0 7 5"><path d="M0.5 4 L3.5 0.8 L6.5 4 Z" fill="#aaa"/></svg>
<svg class="a" style="left:1872.2px;top:906px" width="7" height="5" viewBox="0 0 7 5"><path d="M0.5 4 L3.5 0.8 L6.5 4 Z" fill="#aaa"/></svg>
<svg class="a" style="left:1872.2px;top:910.5px" width="7" height="5" viewBox="0 0 7 5"><path d="M0.5 4 L3.5 0.8 L6.5 4 Z" fill="#aaa"/></svg>
<svg class="a" style="left:1872.2px;top:924.3px" width="7" height="5" viewBox="0 0 7 5"><path d="M0.5 4 L3.5 0.8 L6.5 4 Z" fill="#aaa"/></svg>
<svg class="a" style="left:1872.2px;top:940.5px" width="7" height="5" viewBox="0 0 7 5"><path d="M0.5 0.8 L3.5 4 L6.5 0.8 Z" fill="#aaa"/></svg>
<svg class="a" style="left:1872.2px;top:955.5px" width="7" height="5" viewBox="0 0 7 5"><path d="M0.5 0.8 L3.5 4 L6.5 0.8 Z" fill="#aaa"/></svg>
<svg class="a" style="left:1872.2px;top:960px" width="7" height="5" viewBox="0 0 7 5"><path d="M0.5 0.8 L3.5 4 L6.5 0.8 Z" fill="#aaa"/></svg>
<svg class="a" style="left:1872.2px;top:969.5px" width="7" height="5" viewBox="0 0 7 5"><path d="M0.5 0.8 L3.5 4 L6.5 0.8 Z" fill="#aaa"/></svg>
<svg class="a" style="left:1872.2px;top:974px" width="7" height="5" viewBox="0 0 7 5"><path d="M0.5 0.8 L3.5 4 L6.5 0.8 Z" fill="#aaa"/></svg>
<div class="a" style="left:1872.2px;top:980.5px;width:7px;height:1px;background:#aaa;"></div>
<div class="a" style="left:1871.7px;top:991px;width:8px;height:2px;background:#8c8c8c;"></div>
<div class="a" style="left:1874.7px;top:988px;width:2px;height:8px;background:#8c8c8c;"></div>
<div class="a" style="left:1871.7px;top:1008px;width:8px;height:2px;background:#555;"></div>
<div class="a" style="left:987px;top:738px;width:181px;height:139px;background:#f1f1f1;border:1px solid #a6a6a6;"></div>
<span class="a t" style="left:1016.30px;top:749px;font-size:12px;line-height:1;color:#111;letter-spacing:-0.401px;">Poste de charge</span>
<svg class="a" style="left:993.5px;top:747.2px" width="17" height="17" viewBox="0 0 17 17"><g opacity="0.48"><rect x="1.5" y="2" width="9" height="11.5" rx="1.2" fill="#fde3e0" stroke="#ef8f86" stroke-width="0.9"/>
<rect x="3.3" y="4" width="5.4" height="3" fill="#fff" stroke="#ef8f86" stroke-width="0.7"/>
<path d="M5 9 L7 9 L6 11.6 Z" fill="#ef8f86"/><path d="M0.6 14.6 H11.6" stroke="#ef8f86" stroke-width="1"/>
<path d="M12.6 2.4 V5 M14.6 2.4 V5 M12 5 H15.2 V7 Q13.6 9 12 7 Z M13.6 8.4 V11 Q13.6 12.6 11 12.4" stroke="#f3b56a" stroke-width="0.8" fill="none"/></g></svg>
<span class="a t" style="left:1016.30px;top:775px;font-size:12px;line-height:1;color:#111;letter-spacing:-0.262px;">Gestion Incidents</span>
<svg class="a" style="left:993.5px;top:772.4px" width="17" height="17" viewBox="0 0 17 17"><circle cx="4" cy="4.2" r="2.6" fill="#8796a6"/><circle cx="12.2" cy="4.2" r="2.6" fill="#8796a6"/>
<path d="M2.6 4.2 H5.4 M10.8 4.2 H13.6" stroke="#c5ced8" stroke-width="1"/>
<path d="M8.1 4.8 L12.4 11.3 L3.8 11.3 Z" fill="#ffa726" stroke="#ffb74d" stroke-width="0.6" stroke-linejoin="round"/>
<path d="M8.1 11.6 V13.8" stroke="#ff4d1c" stroke-width="2.8" stroke-linecap="round"/></svg>
<span class="a t" style="left:1016.30px;top:802px;font-size:12px;line-height:1;color:#111;letter-spacing:-0.106px;">Nombre d&#x27;exemplaire</span>
<svg class="a" style="left:993.5px;top:799px" width="17" height="17" viewBox="0 0 17 17"><g><circle cx="6.4" cy="10" r="4.6" fill="#39aef0" stroke="#1f86cc" stroke-width="0.8"/>
<path d="M6.4 3.6 V16.4 M0 10 H12.8 M1.9 5.5 L10.9 14.5 M10.9 5.5 L1.9 14.5" stroke="#35a8ee" stroke-width="2.2"/>
<circle cx="6.4" cy="10" r="3.8" fill="#52c2f7"/><circle cx="6.4" cy="10" r="1.9" fill="#fff"/>
<circle cx="12" cy="4.4" r="2.9" fill="#9aa0b4" stroke="#5c6378" stroke-width="0.8"/>
<path d="M12 0.4 V8.4 M8 4.4 H16 M9.2 1.6 L14.8 7.2 M14.8 1.6 L9.2 7.2" stroke="#737a90" stroke-width="1.3"/>
<circle cx="12" cy="4.4" r="2.3" fill="#a6acc0"/><circle cx="12" cy="4.4" r="1.1" fill="#f1f1f1"/></g></svg>
<span class="a t" style="left:1016.30px;top:828px;font-size:12px;line-height:1;color:#111;letter-spacing:-0.282px;">Imprimer OF</span>
<svg class="a" style="left:993.5px;top:825.9px" width="17" height="17" viewBox="0 0 17 17"><g opacity="0.48"><rect x="1.5" y="2" width="9" height="11.5" rx="1.2" fill="#fde3e0" stroke="#ef8f86" stroke-width="0.9"/>
<rect x="3.3" y="4" width="5.4" height="3" fill="#fff" stroke="#ef8f86" stroke-width="0.7"/>
<path d="M5 9 L7 9 L6 11.6 Z" fill="#ef8f86"/><path d="M0.6 14.6 H11.6" stroke="#ef8f86" stroke-width="1"/>
<path d="M12.6 2.4 V5 M14.6 2.4 V5 M12 5 H15.2 V7 Q13.6 9 12 7 Z M13.6 8.4 V11 Q13.6 12.6 11 12.4" stroke="#f3b56a" stroke-width="0.8" fill="none"/></g></svg>
<span class="a t" style="left:1016.30px;top:855px;font-size:12px;line-height:1;color:#111;letter-spacing:-0.163px;">Imprimer Bon Travail</span>
<svg class="a" style="left:993.5px;top:853.2px" width="17" height="17" viewBox="0 0 17 17"><g opacity="0.48"><rect x="1.5" y="2" width="9" height="11.5" rx="1.2" fill="#fde3e0" stroke="#ef8f86" stroke-width="0.9"/>
<rect x="3.3" y="4" width="5.4" height="3" fill="#fff" stroke="#ef8f86" stroke-width="0.7"/>
<path d="M5 9 L7 9 L6 11.6 Z" fill="#ef8f86"/><path d="M0.6 14.6 H11.6" stroke="#ef8f86" stroke-width="1"/>
<path d="M12.6 2.4 V5 M14.6 2.4 V5 M12 5 H15.2 V7 Q13.6 9 12 7 Z M13.6 8.4 V11 Q13.6 12.6 11 12.4" stroke="#f3b56a" stroke-width="0.8" fill="none"/></g></svg>
</body></html>
